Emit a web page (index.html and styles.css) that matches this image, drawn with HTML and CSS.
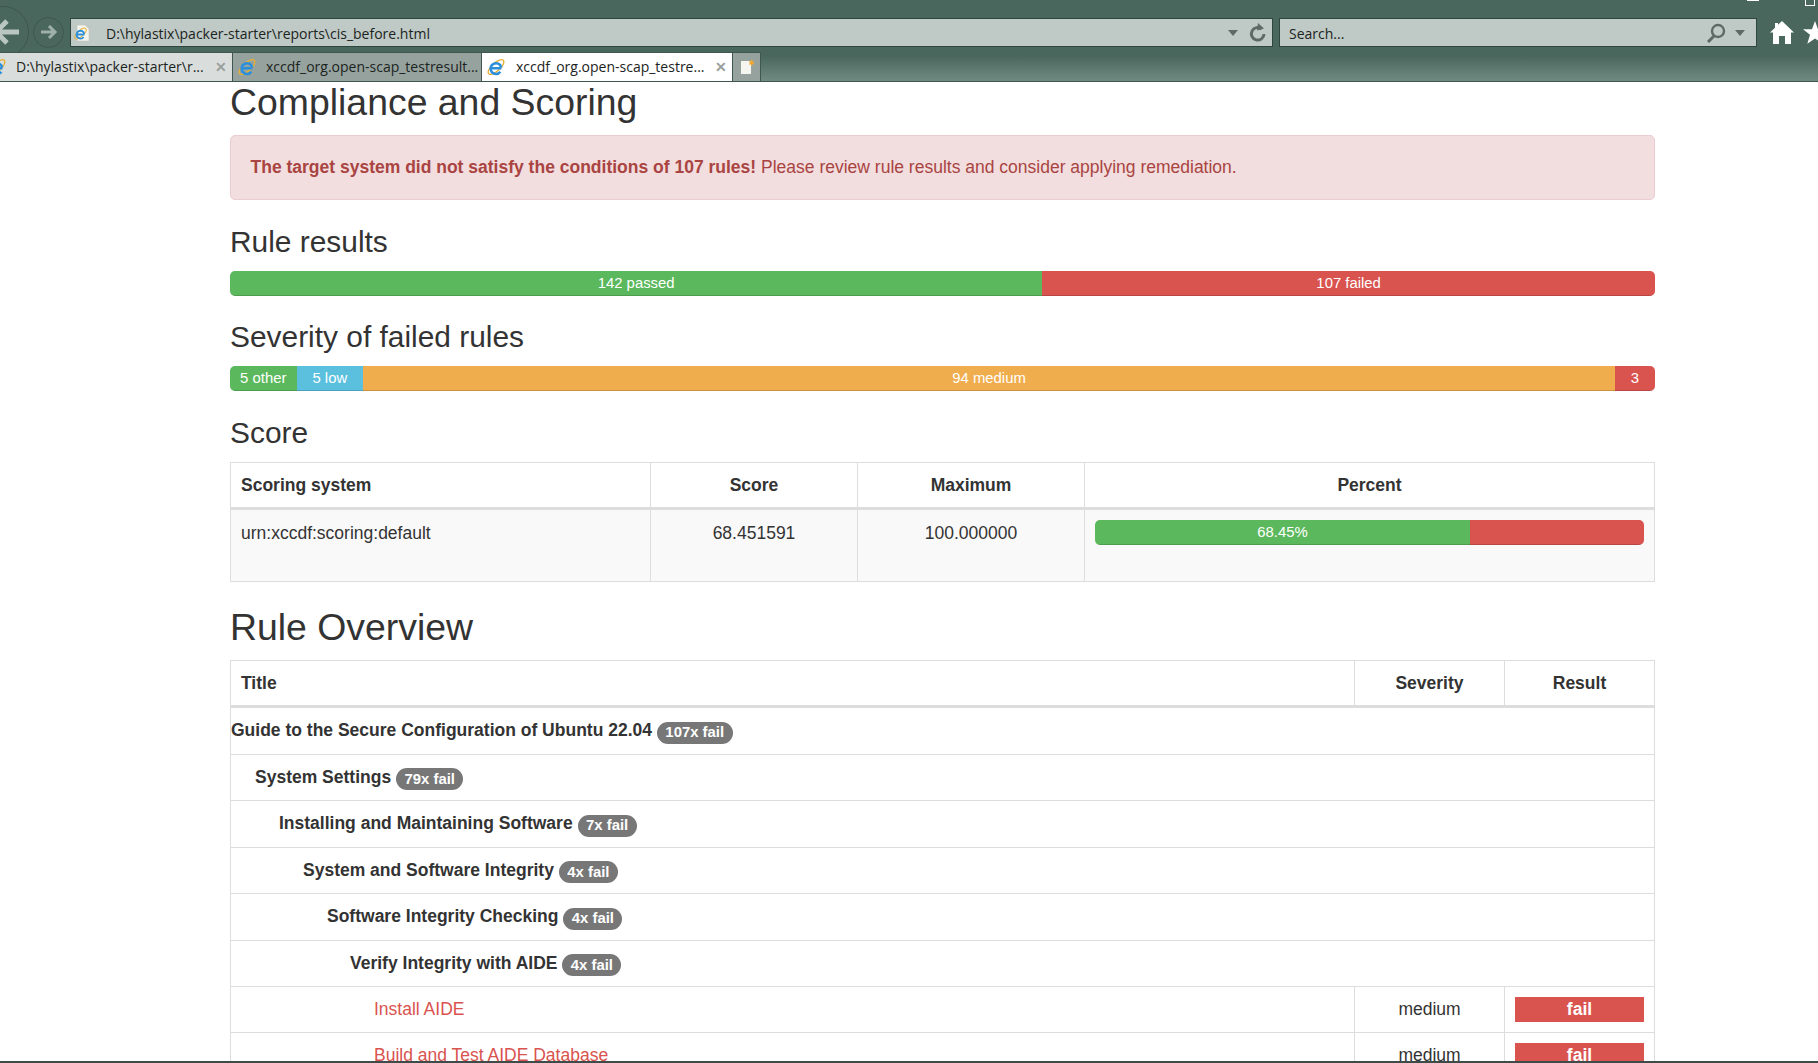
FILE: index.html
```html
<!DOCTYPE html>
<html lang="en">
<head>
    <meta charset="utf-8">
    <meta name="viewport" content="width=device-width, initial-scale=1.0">
    <title>OpenSCAP Evaluation Report</title>
    <link rel="stylesheet" href="styles.css">
</head>
<body>
    <svg class="defs" width="0" height="0">
        <symbol id="ie" viewBox="0 0 20 20">
            <ellipse cx="10" cy="10" rx="11" ry="4.500" transform="rotate(-42 10 10)" fill="none" stroke="#e8b030" stroke-width="1.500"/>
            <path d="M4.500 11.500h11.500M14.800 15.300A6 6 0 1 1 15.800 10.500" fill="none" stroke="#2b8fdc" stroke-width="2.800"/>
        </symbol>
    </svg>

    <header class="browser">
        <div class="controls">
            <span class="ctl-min"></span>
            <span class="ctl-max"></span>
        </div>
        <div class="toolbar">
            <button class="nav nav-back">
                <svg width="34" height="34" viewBox="0 0 34 34"><path d="M33 17H12M21 6L10 17l11 11" fill="none" stroke="#b9c6c1" stroke-width="5"/></svg>
            </button>
            <button class="nav nav-fwd">
                <svg width="18" height="18" viewBox="0 0 18 18"><path d="M1 9h14M9 3l6 6-6 6" fill="none" stroke="#9fb0aa" stroke-width="3"/></svg>
            </button>
            <div class="field field-address">
                <svg class="page-icon" width="16" height="18" viewBox="0 0 16 18">
                    <path d="M3 1h8l4 4v12H3z" fill="#f4f4ee" stroke="#c8c8c0" stroke-width=".6"/>
                    <use href="#ie" x="0" y="3" width="13" height="13"/>
                </svg>
                <span class="field-text">D:\hylastix\packer-starter\reports\cis_before.html</span>
                <span class="caret"></span>
                <svg class="reload" width="18" height="20" viewBox="0 0 18 20">
                    <path d="M12.800 6A6.300 6.300 0 1 0 15 11" fill="none" stroke="#5e6a66" stroke-width="3"/>
                    <path d="M9 0l6 5.500-7 2z" fill="#5e6a66"/>
                </svg>
            </div>
            <div class="field field-search">
                <span class="field-text">Search...</span>
                <svg class="lens" width="20" height="20" viewBox="0 0 20 20">
                    <circle cx="12" cy="8" r="6" fill="none" stroke="#5e6a66" stroke-width="2.400"/>
                    <path d="M8 13l-6 6" stroke="#5e6a66" stroke-width="3"/>
                </svg>
                <span class="caret"></span>
            </div>
            <svg class="tool-icon" width="24" height="23" viewBox="0 0 24 23">
                <path d="M12 0l12 11.500h-3V23h-6v-8H9v8H3V11.500H0L5 6.700V2h3v1.800z" fill="#fff"/>
            </svg>
            <svg class="tool-icon tool-star" width="24" height="23" viewBox="0 0 24 23">
                <path d="M12 0l3 8.300h9l-7 5.400 2.700 9L12 17.500 4.300 22.700l2.700-9-7-5.400h9z" fill="#fff"/>
            </svg>
        </div>
        <div class="tabs">
            <div class="tab tab-first">
                <svg class="tab-icon tab-icon-cut" width="18" height="18"><use href="#ie"/></svg>
                <span class="tab-title">D:\hylastix\packer-starter\r...</span>
                <span class="tab-close">&#10005;</span>
            </div>
            <div class="tab tab-dim">
                <svg class="tab-icon" width="18" height="18"><use href="#ie"/></svg>
                <span class="tab-title">xccdf_org.open-scap_testresult...</span>
            </div>
            <div class="tab tab-active">
                <svg class="tab-icon" width="18" height="18"><use href="#ie"/></svg>
                <span class="tab-title">xccdf_org.open-scap_testre...</span>
                <span class="tab-close">&#10005;</span>
            </div>
            <div class="tab-new">
                <svg width="16" height="16" viewBox="0 0 16 16">
                    <path d="M2 2h10v13H2z" fill="#f6f6f0"/>
                    <path d="M12 0l1 2 2-.5-1 2 1.500 1.500-2 .2-.5 2-1.200-1.800-2 .2 1-1.800-1-1.700 2 .3z" fill="#f0a830"/>
                </svg>
            </div>
        </div>
    </header>

    <main class="page">
        <div class="container">
            <h2>Compliance and Scoring</h2>
            <div class="alert"><strong>The target system did not satisfy the conditions of 107 rules!</strong> Please review rule results and consider applying remediation.</div>

            <h3>Rule results</h3>
            <div class="progress">
                <div class="bar bar-green" style="width: 57%">142 passed</div>
                <div class="bar bar-red" style="width: 43%">107 failed</div>
            </div>

            <h3>Severity of failed rules</h3>
            <div class="progress progress-severity">
                <div class="bar bar-green" style="width: 4.67%">5 other</div>
                <div class="bar bar-blue" style="width: 4.67%">5 low</div>
                <div class="bar bar-orange" style="width: 87.85%">94 medium</div>
                <div class="bar bar-red" style="width: 2.81%">3</div>
            </div>

            <h3>Score</h3>
            <table class="table table-score">
                <colgroup>
                    <col class="col-system"><col class="col-score"><col class="col-max"><col>
                </colgroup>
                <thead>
                    <tr><th>Scoring system</th><th class="center">Score</th><th class="center">Maximum</th><th class="center">Percent</th></tr>
                </thead>
                <tbody>
                    <tr class="striped">
                        <td>urn:xccdf:scoring:default</td>
                        <td class="center">68.451591</td>
                        <td class="center">100.000000</td>
                        <td class="cell-bar">
                            <div class="progress progress-cell">
                                <div class="bar bar-green" style="width: 68.3%">68.45%</div>
                                <div class="bar bar-red" style="width: 31.7%"></div>
                            </div>
                        </td>
                    </tr>
                </tbody>
            </table>

            <h2>Rule Overview</h2>
            <table class="table table-rules">
                <colgroup>
                    <col><col class="col-severity"><col class="col-result">
                </colgroup>
                <thead>
                    <tr><th>Title</th><th class="center">Severity</th><th class="center">Result</th></tr>
                </thead>
                <tbody>
                    <tr class="group"><td colspan="3" class="level-0">Guide to the Secure Configuration of Ubuntu 22.04 <span class="badge">107x fail</span></td></tr>
                    <tr class="group"><td colspan="3" class="level-1">System Settings <span class="badge">79x fail</span></td></tr>
                    <tr class="group"><td colspan="3" class="level-2">Installing and Maintaining Software <span class="badge">7x fail</span></td></tr>
                    <tr class="group"><td colspan="3" class="level-3">System and Software Integrity <span class="badge">4x fail</span></td></tr>
                    <tr class="group"><td colspan="3" class="level-4">Software Integrity Checking <span class="badge">4x fail</span></td></tr>
                    <tr class="group"><td colspan="3" class="level-5">Verify Integrity with AIDE <span class="badge">4x fail</span></td></tr>
                    <tr>
                        <td class="level-6"><a href="#">Install AIDE</a></td>
                        <td class="center">medium</td>
                        <td class="center"><span class="label-fail">fail</span></td>
                    </tr>
                    <tr>
                        <td class="level-6"><a href="#">Build and Test AIDE Database</a></td>
                        <td class="center">medium</td>
                        <td class="center"><span class="label-fail">fail</span></td>
                    </tr>
                </tbody>
            </table>
        </div>
    </main>
    <div class="taskbar"></div>
</body>
</html>
```

FILE: styles.css
```css
*{
    box-sizing: border-box;
}
html, body{
    margin: 0;
    height: 100%;
}
body{
    display: flex;
    flex-direction: column;
    overflow: hidden;
    background-color: white;
    color: #333;
    font-family: "Liberation Sans", Arial, sans-serif;
    font-size: 17.5px;
    line-height: 24.8px;
}
.defs{
    display: none;
}

/* browser window top */
.browser{
    position: relative;
    flex: none;
    height: 82px;
    overflow: hidden;
    background: linear-gradient(#4a675e 0, #4a675e 56px, #708a81 81px);
    border-bottom: 1px solid #3f5750;
    font-family: "Open Sans", "Noto Sans", sans-serif;
    color: #1c2422;
}
.controls{
    position: absolute;
    top: 0;
    right: 0;
    display: flex;
}
.ctl-min{
    width: 12px;
    height: 1px;
    margin-right: 46px;
    background-color: white;
}
.ctl-max{
    width: 10px;
    height: 6px;
    margin-right: 3px;
    border: 1px solid white;
    border-top: none;
}
.toolbar{
    display: flex;
    align-items: center;
    height: 47px;
    padding-top: 18px;
}
.nav{
    display: flex;
    flex: none;
    align-items: center;
    justify-content: center;
    padding: 0;
    background: none;
    border: 1px solid #3c5750;
    border-radius: 50%;
}
.nav-back{
    width: 52px;
    height: 52px;
    margin-left: -23px;
    margin-top: -1px;
}
.nav-fwd{
    width: 31px;
    height: 31px;
    margin-left: 4px;
    margin-top: -1px;
}
.field{
    display: flex;
    flex: none;
    align-items: center;
    height: 29px;
    background-color: #bfc9c5;
    border: 1px solid #2f4540;
    font-size: 14px;
}
.field-text{
    padding-top: 3px;
}
.field-address{
    width: 1203px;
    margin-left: 6px;
    padding-left: 3px;
}
.field-address .field-text{
    margin-left: 16px;
    flex: 1;
}
.field-search{
    width: 478px;
    margin-left: 6px;
    padding-left: 9px;
}
.field-search .field-text{
    flex: 1;
}
.caret{
    width: 0;
    height: 0;
    border-left: 5px solid transparent;
    border-right: 5px solid transparent;
    border-top: 6px solid #5e6a66;
}
.reload{
    margin: 0 5px 0 11px;
}
.lens{
    margin-right: 9px;
}
.field-search .caret{
    margin-right: 11px;
}
.tool-icon{
    flex: none;
    margin-left: 13px;
}
.tool-star{
    margin-left: 9px;
}
.tabs{
    display: flex;
    height: 34px;
    padding-top: 5px;
}
.tab{
    display: flex;
    flex: none;
    align-items: center;
    width: 250px;
    height: 29px;
    padding-left: 5px;
    border-right: 1px solid #3f5750;
    border-top: 1px solid #3f5750;
    font-size: 14px;
    white-space: nowrap;
}
.tab-first{
    width: 233px;
    padding-left: 0;
    background-color: #d9dedc;
}
.tab-dim{
    width: 249px;
    background-color: #95a29d;
}
.tab-active{
    width: 251px;
    background-color: white;
}
.tab-icon{
    flex: none;
}
.tab-icon-cut{
    margin-left: -12px;
}
.tab-title{
    flex: 1;
    margin-left: 10px;
    padding-top: 1px;
    overflow: hidden;
}
.tab-active .tab-title{
    margin-left: 11px;
}
.tab-close{
    margin-right: 5px;
    color: #9aa09e;
    font-size: 14px;
    font-weight: bold;
}
.tab-new{
    display: flex;
    align-items: center;
    justify-content: center;
    width: 28px;
    height: 29px;
    background-color: #95a29d;
    border-top: 1px solid #3f5750;
    border-right: 1px solid #3f5750;
}

/* report */
.page{
    flex: 1;
    min-height: 0;
    overflow: hidden;
}
.container{
    width: 1425px;
    margin-left: 230px;
}
h2, h3{
    margin: 0 0 12.4px;
    font-weight: 400;
}
h2{
    font-size: 37.4px;
    line-height: 40px;
    margin-bottom: 13.4px;
}
h3{
    font-size: 29.9px;
    line-height: 32.7px;
}
.alert{
    height: 65px;
    margin-bottom: 26px;
    padding: 19px 19.5px;
    background-color: #f2dede;
    border: 1px solid #ebccd1;
    border-radius: 5px;
    color: #a94442;
}
.progress{
    display: flex;
    height: 25px;
    margin-bottom: 24.4px;
    overflow: hidden;
    background-color: #f5f5f5;
    border-radius: 5px;
}
.progress-severity{
    margin-bottom: 25.6px;
}
.bar{
    flex: none;
    color: white;
    font-size: 14.88px;
    line-height: 25px;
    text-align: center;
    box-shadow: inset 0 -1px 0 rgba(0, 0, 0, .15);
}
.bar-green{
    background-color: #5cb85c;
}
.bar-red{
    background-color: #d9534f;
}
.bar-orange{
    background-color: #f0ad4e;
}
.bar-blue{
    background-color: #5bc0de;
}
.table{
    width: 100%;
    margin-bottom: 24.5px;
    table-layout: fixed;
    border-collapse: collapse;
    border: 1px solid #ddd;
}
.table th, .table td{
    padding: 10px;
    border: 1px solid #ddd;
    vertical-align: top;
}
.table th{
    border-bottom: 3px solid #ddd;
    font-weight: bold;
    text-align: left;
}
.table .center{
    text-align: center;
}
.table-rules th{
    padding-bottom: 9px;
}
.table-rules td{
    height: 46.2px;
}
.striped td{
    padding-top: 11px;
    background-color: #f9f9f9;
}
.striped .cell-bar{
    padding-top: 10px;
}
.col-system{
    width: 420px;
}
.col-score{
    width: 207px;
}
.col-max{
    width: 227px;
}
.col-severity, .col-result{
    width: 150px;
}
.progress-cell{
    margin-bottom: 26px;
}
.group td{
    font-weight: bold;
}
.table td.level-0{ padding-left: 0; }
.table td.level-1{ padding-left: 24px; }
.table td.level-2{ padding-left: 48px; }
.table td.level-3{ padding-left: 72px; }
.table td.level-4{ padding-left: 96px; }
.table td.level-5{ padding-left: 119px; }
.table td.level-6{ padding-left: 143px; }
.badge{
    display: inline-block;
    min-width: 12px;
    padding: 3.5px 8.5px;
    background-color: #777;
    border-radius: 12px;
    color: white;
    font-size: 14.88px;
    line-height: 15px;
    vertical-align: -1px;
}
a{
    color: #d9534f;
    text-decoration: none;
}
.label-fail{
    display: block;
    height: 25px;
    background-color: #d9534f;
    color: white;
    font-weight: bold;
}
.taskbar{
    flex: none;
    height: 2px;
    background-color: #3d4c49;
}
```
